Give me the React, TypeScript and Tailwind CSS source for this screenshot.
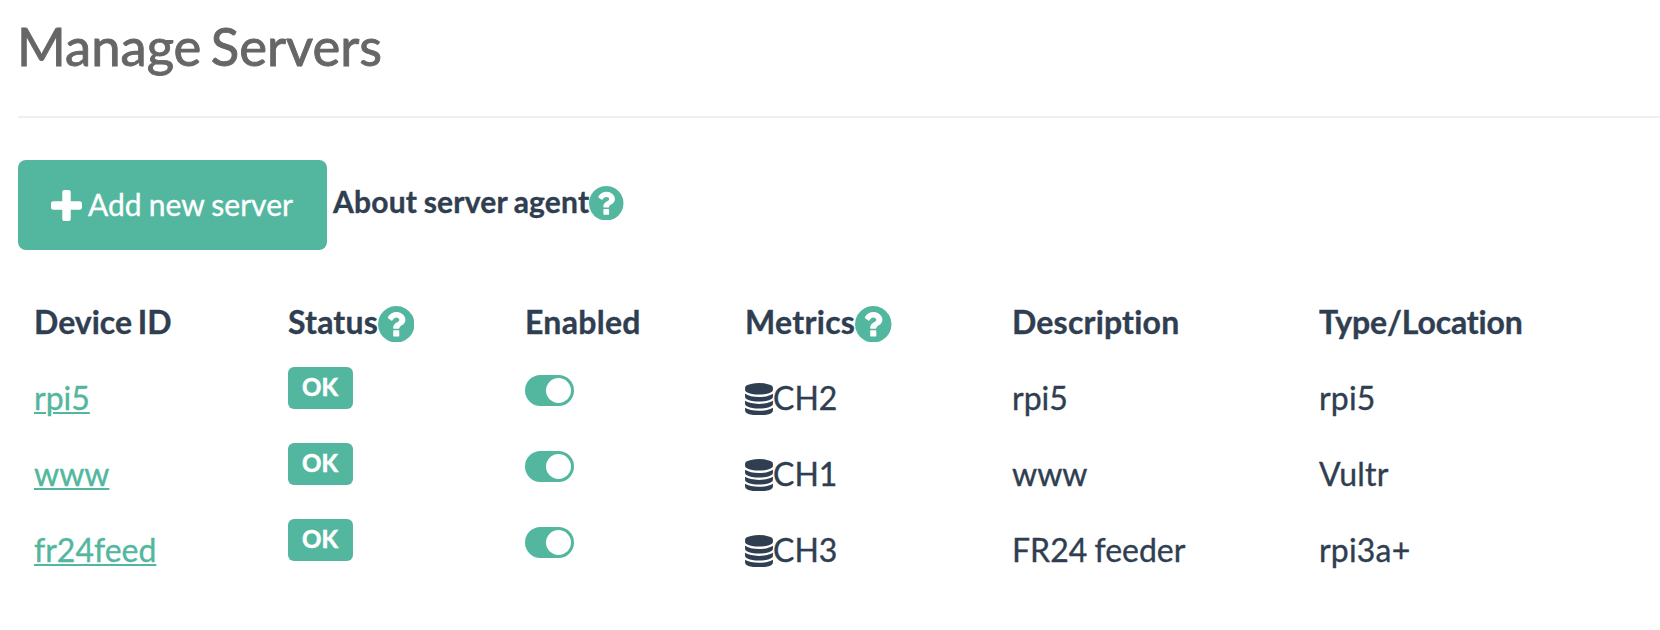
const servers = [
  { id: "rpi5", metrics: "CH2", description: "rpi5", location: "rpi5" },
  { id: "www", metrics: "CH1", description: "www", location: "Vultr" },
  { id: "fr24feed", metrics: "CH3", description: "FR24 feeder", location: "rpi3a+" },
];

const columns = "grid grid-cols-[254px_237px_220px_267px_307px_1fr] pl-[34px]";

function PlusIcon() {
  return (
    <svg viewBox="192 128 1408 1408" className="w-[31px] h-[31px] shrink-0" fill="currentColor">
      <path d="M1600 736v192q0 40-28 68t-68 28h-416v416q0 40-28 68t-68 28h-192q-40 0-68-28t-28-68v-416h-416q-40 0-68-28t-28-68v-192q0-40 28-68t68-28h416v-416q0-40 28-68t68-28h192q40 0 68 28t28 68v416h416q40 0 68 28t28 68z" />
    </svg>
  );
}

function HelpIcon({ className }: { className: string }) {
  return (
    <svg viewBox="128 128 1536 1536" className={`shrink-0 text-[#52b79e] ${className}`} fill="currentColor">
      <path d="M1024 1376v-192q0-14-9-23t-23-9h-192q-14 0-23 9t-9 23v192q0 14 9 23t23 9h192q14 0 23-9t9-23zm256-672q0-88-55.500-163t-138.500-116-170-41q-243 0-371 213-15 24 8 42l132 100q7 6 19 6 16 0 25-12 53-68 86-92 34-24 86-24 48 0 85.500 26t37.500 59q0 38-20 61t-68 45q-63 28-115.500 86.500t-52.500 125.500v36q0 14 9 23t23 9h192q14 0 23-9t9-23q0-19 21.500-49.500t54.500-49.500q32-18 49-28.500t46-35 44.500-48 28-60.500 12.500-81zm384 192q0 209-103 385.500t-279.500 279.500-385.500 103-385.500-103-279.500-279.500-103-385.500 103-385.500 279.500-279.500 385.500-103 385.500 103 279.500 279.500 103 385.500z" />
    </svg>
  );
}

function DatabaseIcon() {
  return (
    <svg viewBox="0 0 1536 1792" className="w-[28px] h-[32.5px] mt-[23.5px] shrink-0" fill="currentColor">
      <path d="M768 768q237 0 443-43t325-127v170q0 69-103 128t-280 93.500-385 34.500-385-34.500-280-93.500-103-128v-170q119 84 325 127t443 43zm0 768q237 0 443-43t325-127v170q0 69-103 128t-280 93.500-385 34.500-385-34.500-280-93.500-103-128v-170q119 84 325 127t443 43zm0-384q237 0 443-43t325-127v170q0 69-103 128t-280 93.500-385 34.500-385-34.500-280-93.500-103-128v-170q119 84 325 127t443 43zm0-1152q208 0 385 34.500t280 93.500 103 128v128q0 69-103 128t-280 93.500-385 34.500-385-34.500-280-93.500-103-128v-128q0-69 103-128t280-93.500 385-34.500z" />
    </svg>
  );
}

function Toggle() {
  return (
    <div className="mt-4 flex h-[31px] w-[49px] items-center justify-end rounded-full bg-[#52b79e] pr-[3px]">
      <div className="h-[25px] w-[25px] rounded-full bg-white" />
    </div>
  );
}

export default function App() {
  return (
    <div className="h-[630px] w-full overflow-hidden bg-white font-['Lato',sans-serif] text-[32px] text-[#2f3e50] [font-variant-ligatures:none] [-webkit-text-stroke:0.35px]">
      <h1 className="ml-[17px] h-[116px] pt-[14px] text-[52.6px] leading-[64px] text-[#666] [word-spacing:-4px] [-webkit-text-stroke:0.9px]">
        Manage Servers
      </h1>
      <hr className="ml-[18px] border-t-2 border-[#ecf0f1]" />

      <div className="ml-[18px] mt-[42px] flex h-[90px] text-[30px]">
        <button className="flex w-[309px] items-center gap-[6px] rounded-lg bg-[#52b79e] pl-[33px] text-white [word-spacing:-0.5px]">
          <PlusIcon />
          <span className="pb-[2px]">Add new server</span>
        </button>
        <div className="ml-[6px] flex h-[86px] items-center font-bold tracking-[0.2px] [word-spacing:-1px]">
          <span className="pb-[3px]">About server agent</span>
          <HelpIcon className="w-[34.5px] h-[34.5px]" />
        </div>
      </div>

      <div className={`${columns} mt-[35px] h-[74px] items-center leading-[48px] font-bold`}>
        <div className="[word-spacing:-2px]">Device ID</div>
        <div className="flex items-center tracking-[0.2px]">
          Status
          <HelpIcon className="mt-[4px] w-[36.5px] h-[36.5px]" />
        </div>
        <div className="tracking-[0.3px]">Enabled</div>
        <div className="flex items-center tracking-[0.3px]">
          Metrics
          <HelpIcon className="mt-[4px] w-[36.5px] h-[36.5px]" />
        </div>
        <div className="tracking-[0.2px]">Description</div>
        <div className="tracking-[-0.15px]">Type/Location</div>
      </div>

      {servers.map((server) => (
        <div key={server.id} className={`${columns} h-[76px]`}>
          <div className="pt-[15px] leading-[48px]">
            <a
              href="#"
              className="text-[#52b79e] underline decoration-2 underline-offset-[2px]"
            >
              {server.id}
            </a>
          </div>
          <div>
            <span className="mt-2 flex h-[42px] w-[65px] items-center justify-center rounded-md bg-[#52b79e] pr-px pb-[2px] text-2xl font-bold text-white [-webkit-text-stroke:0.6px]">
              OK
            </span>
          </div>
          <Toggle />
          <div className="flex">
            <DatabaseIcon />
            <span className="pt-[15px] leading-[48px]">{server.metrics}</span>
          </div>
          <div className="pt-[15px] leading-[48px] [word-spacing:-1px]">{server.description}</div>
          <div className="pt-[15px] leading-[48px] tracking-[0.2px]">{server.location}</div>
        </div>
      ))}
    </div>
  );
}
